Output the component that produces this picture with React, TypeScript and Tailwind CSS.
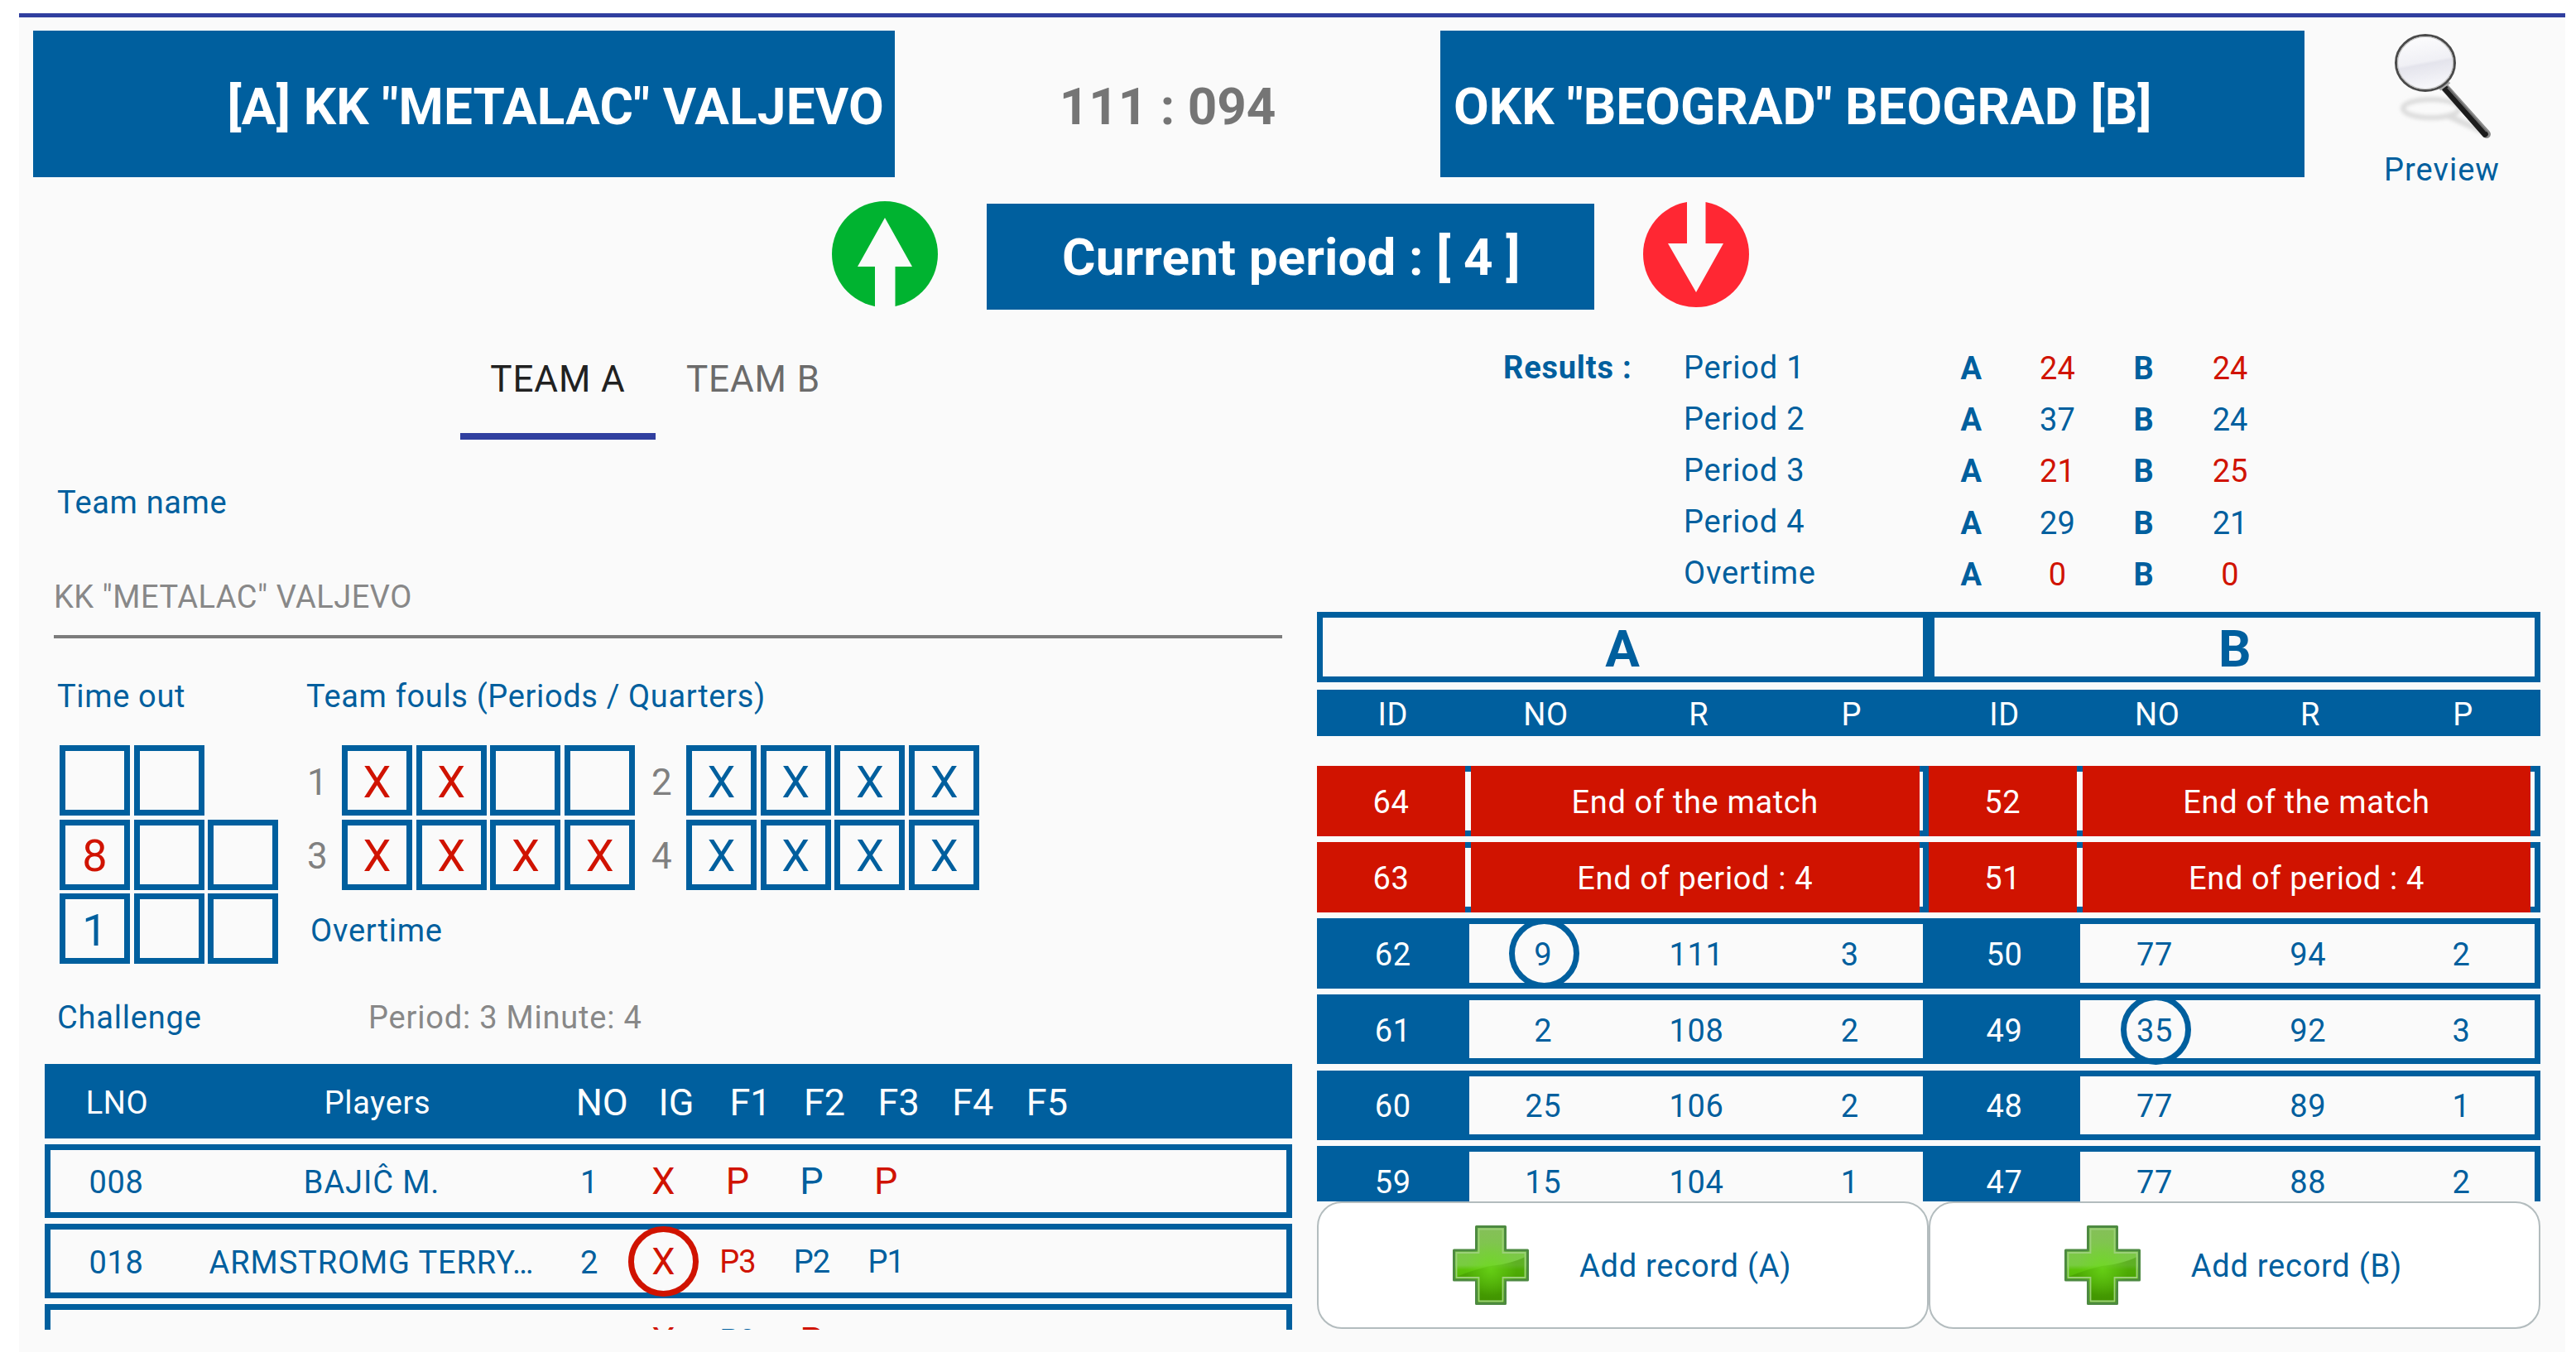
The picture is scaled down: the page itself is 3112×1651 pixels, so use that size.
import React, { useState } from 'react';

type Ink = 'red' | 'blue';

interface Mark {
  text: string;
  ink: Ink;
  circled?: boolean;
}

interface Player {
  lno: string;
  name: string;
  no: string;
  marks: Mark[];
}

interface ScoreRecord {
  id: number;
  event?: string;
  no?: number;
  result?: number;
  points?: number;
  circled?: boolean;
}

const RESULTS: { label: string; a: number; b: number; ink: Ink }[] = [
  { label: 'Period 1', a: 24, b: 24, ink: 'red' },
  { label: 'Period 2', a: 37, b: 24, ink: 'blue' },
  { label: 'Period 3', a: 21, b: 25, ink: 'red' },
  { label: 'Period 4', a: 29, b: 21, ink: 'blue' },
  { label: 'Overtime', a: 0, b: 0, ink: 'red' },
];

const TIME_OUTS: { count: number; value?: string; ink?: Ink }[] = [
  { count: 2 },
  { count: 3, value: '8', ink: 'red' },
  { count: 3, value: '1', ink: 'blue' },
];

const FOULS: { period: number; count: number; ink: Ink }[] = [
  { period: 1, count: 2, ink: 'red' },
  { period: 2, count: 4, ink: 'blue' },
  { period: 3, count: 4, ink: 'red' },
  { period: 4, count: 4, ink: 'blue' },
];

const PLAYERS: Player[] = [
  {
    lno: '008', name: 'BAJIĈ M.', no: '1',
    marks: [{ text: 'X', ink: 'red' }, { text: 'P', ink: 'red' }, { text: 'P', ink: 'blue' }, { text: 'P', ink: 'red' }],
  },
  {
    lno: '018', name: 'ARMSTROMG TERRY…', no: '2',
    marks: [{ text: 'X', ink: 'red', circled: true }, { text: 'P3', ink: 'red' }, { text: 'P2', ink: 'blue' }, { text: 'P1', ink: 'blue' }],
  },
  {
    lno: '', name: '', no: '',
    marks: [{ text: 'X', ink: 'red' }, { text: 'P2', ink: 'blue' }, { text: 'P', ink: 'red' }],
  },
];

const RECORDS_A: ScoreRecord[] = [
  { id: 64, event: 'End of the match' },
  { id: 63, event: 'End of period : 4' },
  { id: 62, no: 9, result: 111, points: 3, circled: true },
  { id: 61, no: 2, result: 108, points: 2 },
  { id: 60, no: 25, result: 106, points: 2 },
  { id: 59, no: 15, result: 104, points: 1 },
];

const RECORDS_B: ScoreRecord[] = [
  { id: 52, event: 'End of the match' },
  { id: 51, event: 'End of period : 4' },
  { id: 50, no: 77, result: 94, points: 2 },
  { id: 49, no: 35, result: 92, points: 3, circled: true },
  { id: 48, no: 77, result: 89, points: 1 },
  { id: 47, no: 77, result: 88, points: 2 },
];

const inkClass = (ink?: Ink) => (ink === 'red' ? 'text-[#d01300]' : 'text-[#005f9e]');

const MagnifierIcon: React.FC = () => (
  <svg viewBox="0 0 130 140" className="h-[140px] w-[130px] shrink-0">
    <defs>
      <linearGradient id="lens" x1="0" y1="0" x2="0.2" y2="1">
        <stop offset="0" stopColor="#ffffff" />
        <stop offset="0.55" stopColor="#f0f0f5" />
        <stop offset="0.6" stopColor="#e4e4ec" />
        <stop offset="1" stopColor="#f6f6fa" />
      </linearGradient>
      <filter id="soft" x="-20%" y="-40%" width="140%" height="180%">
        <feGaussianBlur stdDeviation="2" />
      </filter>
    </defs>
    <g filter="url(#soft)" fill="none" stroke="#dcdcdc">
      <ellipse cx="47" cy="99" rx="34" ry="11" strokeWidth="6" />
      <path d="M68 108 L112 128" strokeWidth="7" />
    </g>
    <path d="M63 73 L114 130" stroke="#8c8c8c" strokeWidth="10" strokeLinecap="round" />
    <path d="M64 75 L112 130" stroke="#1c1c1c" strokeWidth="7.5" strokeLinecap="round" />
    <path d="M67 74 L114 127" stroke="#6f6f6f" strokeWidth="1.6" />
    <path d="M57 76 L69 67" stroke="#a9a9a9" strokeWidth="4" />
    <ellipse cx="40" cy="44" rx="35.5" ry="33.5" fill="url(#lens)" stroke="#4a4a4a" strokeWidth="3" />
    <ellipse cx="40" cy="44" rx="33.5" ry="31.5" fill="none" stroke="#c4c4c4" strokeWidth="1.2" />
  </svg>
);

const UpIcon: React.FC = () => (
  <svg viewBox="0 0 128 128" className="h-32 w-32">
    <circle cx="64" cy="64" r="64" fill="#00b330" />
    <path d="M64 20 L97 79 H76.5 V128 H52 V79 H31 Z" fill="#fafafa" />
  </svg>
);

const DownIcon: React.FC = () => (
  <svg viewBox="0 0 128 128" className="h-32 w-32">
    <circle cx="64" cy="64" r="64" fill="#ff2733" />
    <path d="M64 110 L97 51 H75.5 V0 H53 V51 H30 Z" fill="#fafafa" />
  </svg>
);

const PlusIcon: React.FC = () => (
  <svg viewBox="0 0 92 96" className="h-24 w-[92px] shrink-0">
    <defs>
      <linearGradient id="plus" x1="0" y1="0" x2="0" y2="1">
        <stop offset="0" stopColor="#86bf5a" />
        <stop offset="0.5" stopColor="#78cc40" />
        <stop offset="0.56" stopColor="#5cc30a" />
        <stop offset="1" stopColor="#419400" />
      </linearGradient>
      <radialGradient id="plusGlow" cx="0.5" cy="0.55" r="0.35">
        <stop offset="0" stopColor="#6fdc1c" />
        <stop offset="1" stopColor="#6fdc1c" stopOpacity="0" />
      </radialGradient>
    </defs>
    <path d="M28.5 1.5 H63.5 V30 H90.5 V66 H63.5 V94.5 H28.5 V66 H1.5 V30 H28.5 Z" fill="url(#plus)" stroke="#4d8a41" strokeWidth="3" strokeLinejoin="round" />
    <path d="M4.5 62 Q30 52 46 49 Q72 46 87.5 38 V63 H60.5 V91.5 H31.5 V63 H4.5 Z" fill="#3f9000" opacity="0.45" />
    <path d="M28.5 1.5 H63.5 V30 H90.5 V66 H63.5 V94.5 H28.5 V66 H1.5 V30 H28.5 Z" fill="url(#plusGlow)" opacity="0.7" />
    <path d="M31.5 4.5 H60.5 V33 H87.5 V63 H60.5 V91.5 H31.5 V63 H4.5 V33 H31.5 Z" fill="none" stroke="#9bd078" strokeWidth="1.8" />
  </svg>
);

const Box: React.FC<{ value?: string; ink?: Ink }> = ({ value, ink }) => (
  <div className={`flex h-[85px] w-[85px] items-center justify-center border-[7px] border-[#005f9e] pt-1 text-[54px] leading-none tracking-normal ${inkClass(ink)}`}>
    {value}
  </div>
);

const FoulRow: React.FC<{ period: number; count: number; ink: Ink }> = ({ period, count, ink }) => (
  <div className="flex items-center">
    <span className="w-[42px] pt-1 text-[44px] leading-none tracking-normal text-[#808080]">{period}</span>
    <div className="flex gap-[4.7px]">
      {[0, 1, 2, 3].map(i => (
        <Box key={i} value={i < count ? 'X' : ''} ink={ink} />
      ))}
    </div>
  </div>
);

const RecordRow: React.FC<{ record: ScoreRecord }> = ({ record }) => {
  if (record.event) {
    return (
      <div className="h-[84.7px] border-[7px] border-[#005f9e]">
        <div className="-mx-[7px] -mt-[7px] flex h-[84.7px] gap-[7px] text-white">
          <div className="flex w-[179px] items-center justify-center bg-[#d01300] pt-[3px]">{record.id}</div>
          <div className="flex w-[541.5px] items-center justify-center bg-[#d01300] pt-[3px]">{record.event}</div>
        </div>
      </div>
    );
  }
  return (
    <div className="h-[84.7px] border-[7px] border-[#005f9e]">
      <div className="-mx-[7px] -mt-[7px] flex h-[84.7px] items-center text-center text-[#005f9e]">
        <div className="-mr-[3px] flex h-full w-[183.5px] items-center justify-center bg-[#005f9e] pt-[3px] text-white">{record.id}</div>
        <div className="flex w-[185.3px] justify-center">
          {record.circled ? (
            <span className="ml-[3px] flex h-[85px] w-[85px] items-center justify-center rounded-full border-[7px] border-[#005f9e] pt-[3px] pr-[3px]">{record.no}</span>
          ) : (
            <span className="pt-[3px]">{record.no}</span>
          )}
        </div>
        <div className="w-[185.3px] pt-[3px]">{record.result}</div>
        <div className="w-[185.3px] pt-[3px]">{record.points}</div>
      </div>
    </div>
  );
};

const PlayerRow: React.FC<{ player: Player }> = ({ player }) => (
  <div className="flex h-[89.5px] shrink-0 items-center border-[7px] border-[#005f9e] text-center text-[#005f9e]">
    <div className="w-[160px] pt-[3px]">{player.lno}</div>
    <div className="w-[457px] pt-[3px] tracking-[0.9px] whitespace-nowrap">{player.name}</div>
    <div className="w-[69px] pt-[3px]">{player.no}</div>
    <div className="ml-[10px] flex items-center tracking-normal">
      {player.marks.map((mark, i) => (
        <div key={i} className={`flex w-[89.6px] justify-center ${inkClass(mark.ink)} ${mark.text.length === 1 ? 'text-[45px]' : 'text-[38px] tracking-[-1px]'}`}>
          <span className={mark.circled ? 'flex h-[85px] w-[85px] items-center justify-center rounded-full border-[7px] border-[#d01300] pt-[2px]' : 'pt-px'}>
            {mark.text}
          </span>
        </div>
      ))}
    </div>
  </div>
);

const App: React.FC = () => {
  const [activeTab, setActiveTab] = useState<'A' | 'B'>('A');

  return (
    <div className="h-[1651px] w-[3112px] overflow-hidden bg-white pt-4 pl-[23px] font-['Roboto',sans-serif] text-[38px] leading-[40px] tracking-[0.65px] text-[#005f9e]">
      <div className="h-[1617px] w-[3076px] border-t-[5px] border-[#303f9f] bg-[#fafafa]">

        {/* Score header */}
        <header className="flex h-[192.5px] pt-[15.5px] pl-[17px] text-[62px] font-bold leading-[70px] tracking-normal whitespace-nowrap">
          <div className="flex w-[1041px] items-center justify-end bg-[#005f9e] pt-[7px] pr-[13px] tracking-[0.2px] text-white">[A] KK "METALAC" VALJEVO</div>
          <div className="flex w-[659px] items-center justify-center pt-[7px] text-[#757575]">111 : 094</div>
          <div className="flex w-[1044px] items-center bg-[#005f9e] pt-[7px] pl-[16px] text-white">OKK "BEOGRAD" BEOGRAD [B]</div>
          <div className="flex flex-1 flex-col items-center pl-[17px] text-[38px] font-normal leading-[40px] tracking-[1px]">
            <div className="-mt-[5px] ml-[10px]"><MagnifierIcon /></div>
            <span className="mt-[13px]">Preview</span>
          </div>
        </header>

        {/* Period switcher */}
        <div className="flex h-[160.5px] items-start pt-[29.5px] pl-[982px]">
          <UpIcon />
          <div className="mt-[2.5px] ml-[58.5px] flex h-[128.5px] w-[734.5px] items-center justify-center bg-[#005f9e] pt-[3px] pl-[2px] text-[62px] font-bold tracking-[0.1px] text-white">
            Current period : [ 4 ]
          </div>
          <div className="ml-[59px]"><DownIcon /></div>
        </div>

        <div className="flex">
          {/* Team panel */}
          <section className="w-[1538px]">
            <nav className="flex pt-[10px] pl-[533px] text-[44px] tracking-[0.9px] whitespace-nowrap">
              <button
                onClick={() => setActiveTab('A')}
                className={`h-[147px] w-[236px] border-b-8 pt-2 ${activeTab === 'A' ? 'border-[#303f9f] text-[#212121]' : 'border-transparent text-[#6b6b6b]'}`}
              >
                TEAM A
              </button>
              <button
                onClick={() => setActiveTab('B')}
                className={`h-[147px] w-[236px] border-b-8 pt-2 ${activeTab === 'B' ? 'border-[#303f9f] text-[#212121]' : 'border-transparent text-[#6b6b6b]'}`}
              >
                TEAM B
              </button>
            </nav>

            <div className="mt-[56px] ml-[46px]">Team name</div>
            <div className="mt-[74px] ml-[42px] h-[70px] w-[1484px] border-b-4 border-[#7c7c7c] tracking-[0.5px] text-[#888888]">KK "METALAC" VALJEVO</div>

            <div className="mt-[49.5px] ml-[46px] flex">
              <span className="w-[301px]">Time out</span>
              <span>Team fouls (Periods / Quarters)</span>
            </div>

            <div className="mt-[39.5px] ml-[49px] flex">
              <div className="flex w-[299px] flex-col gap-[4.7px]">
                {TIME_OUTS.map((row, r) => (
                  <div key={r} className="flex gap-[4.7px]">
                    {Array.from({ length: row.count }, (_, i) => (
                      <Box key={i} value={i === 0 ? row.value : ''} ink={row.ink} />
                    ))}
                  </div>
                ))}
              </div>
              <div>
                <div className="grid grid-cols-[416px_416px] gap-y-[4.7px]">
                  {FOULS.map(f => <FoulRow key={f.period} {...f} />)}
                </div>
                <div className="mt-[29px] ml-[4px] tracking-[0.8px]">Overtime</div>
              </div>
            </div>

            <div className="mt-[45px] ml-[46px] flex">
              <span className="w-[376px] tracking-[0.8px]">Challenge</span>
              <span className="tracking-[0.8px] text-[#888888]">Period: 3 Minute: 4</span>
            </div>

            <div className="mt-[36px] ml-[30.5px] flex h-[321px] w-[1507.5px] flex-col gap-[7px] overflow-hidden">
              <div className="flex h-[89.5px] shrink-0 items-center bg-[#005f9e] pt-[3px] text-center text-white">
                <div className="w-[176px]">LNO</div>
                <div className="w-[453px]">Players</div>
                <div className="flex text-[45px] tracking-normal">
                  {['NO', 'IG', 'F1', 'F2', 'F3', 'F4', 'F5'].map(h => (
                    <div key={h} className="w-[89.6px]">{h}</div>
                  ))}
                </div>
              </div>
              {PLAYERS.map((p, i) => <PlayerRow key={i} player={p} />)}
            </div>
          </section>

          {/* Running score */}
          <section className="ml-[30px] w-[1477.5px]">
            <div className="flex pt-[38.5px]">
              <div className="w-[442px] pt-[11px] pl-[225px] font-bold tracking-[0.8px] whitespace-nowrap">Results :</div>
              <div>
                {RESULTS.map(r => (
                  <div key={r.label} className="flex h-[62.2px] items-center">
                    <div className="w-[296px] pl-px tracking-[0.8px]">{r.label}</div>
                    <div className="flex pt-[3px] text-center tracking-normal">
                      <div className="w-[104.3px] font-bold">A</div>
                      <div className={`w-[104.3px] ${inkClass(r.ink)}`}>{r.a}</div>
                      <div className="w-[104.3px] font-bold">B</div>
                      <div className={`w-[104.3px] ${inkClass(r.ink)}`}>{r.b}</div>
                    </div>
                  </div>
                ))}
              </div>
            </div>

            <div className="mt-[15.5px] grid grid-cols-2 text-center text-[62px] font-bold">
              <div className="flex h-[85px] items-center justify-center border-[7px] border-[#005f9e] pt-[6px]">A</div>
              <div className="flex h-[85px] items-center justify-center border-[7px] border-[#005f9e] pt-[6px] pl-[2px]">B</div>
            </div>

            <div className="mt-[9px] grid h-[56px] grid-cols-8 items-center bg-[#005f9e] pt-[5px] text-center text-white">
              {['ID', 'NO', 'R', 'P', 'ID', 'NO', 'R', 'P'].map((h, i) => (
                <div key={i} className="pr-px">{h}</div>
              ))}
            </div>

            <div className="mt-[36.5px] grid h-[525.5px] grid-cols-2 overflow-hidden">
              <div className="flex flex-col gap-[7.1px]">
                {RECORDS_A.map(r => <RecordRow key={r.id} record={r} />)}
              </div>
              <div className="flex flex-col gap-[7.1px]">
                {RECORDS_B.map(r => <RecordRow key={r.id} record={r} />)}
              </div>
            </div>

            <div className="grid grid-cols-2">
              {['A', 'B'].map(team => (
                <button key={team} className="flex h-[154px] items-center rounded-[30px] border-2 border-[#b3bcbe] bg-white pl-[162px] text-left">
                  <PlusIcon />
                  <span className="ml-[61px] pt-[3px] tracking-[0.75px]">Add record ({team})</span>
                </button>
              ))}
            </div>
          </section>
        </div>
      </div>
    </div>
  );
};

export default App;
